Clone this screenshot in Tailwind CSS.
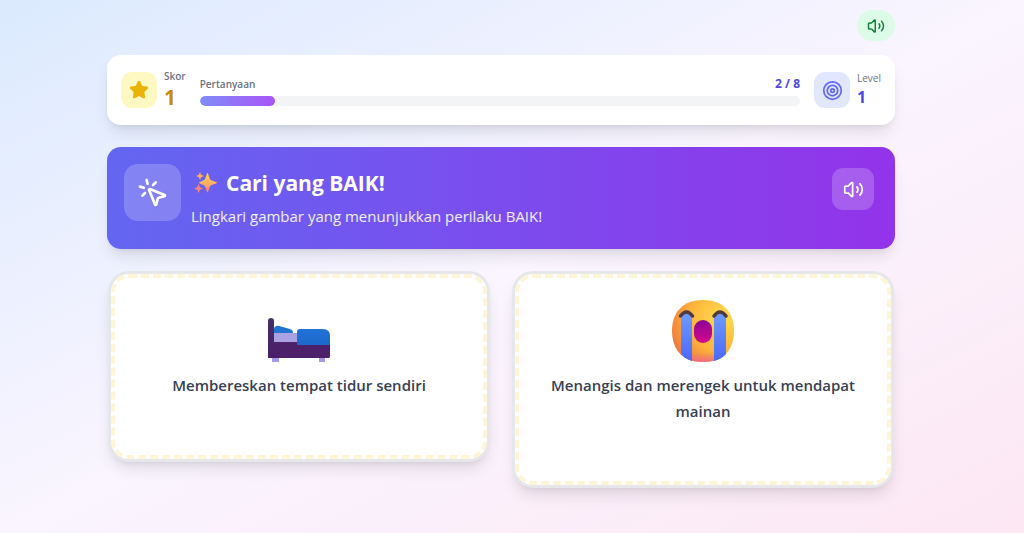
<!DOCTYPE html>
<html lang="id">
<head>
  <meta charset="UTF-8" />
  <meta name="viewport" content="width=device-width, initial-scale=1.0" />
  <title>Cari yang BAIK!</title>
  <script src="https://cdn.jsdelivr.net/npm/@tailwindcss/browser@4"></script>
</head>
<body class="min-h-screen bg-linear-to-br/srgb from-[#dbeafe] via-[#faf5ff] to-[#fce7f3] font-['Segoe_UI','Open_Sans',sans-serif] pr-[22px]">

<div class="max-w-[788px] mx-auto pt-[10px] pb-8">

  <div class="flex justify-end mb-[14px]">
    <button type="button" aria-label="Suara" class="flex items-center justify-center w-[38px] h-[31px] rounded-full bg-[#dcfce7] text-[#15803d]">
      <svg class="size-[18px]" viewBox="0 0 24 24" fill="none" stroke="currentColor" stroke-width="2" stroke-linecap="round" stroke-linejoin="round">
        <path d="M11 4.702a.705.705 0 0 0-1.203-.498L6.413 7.587A1.4 1.4 0 0 1 5.416 8H3a1 1 0 0 0-1 1v6a1 1 0 0 0 1 1h2.416a1.4 1.4 0 0 1 .997.413l3.383 3.384A.705.705 0 0 0 11 19.298z" />
        <path d="M16 9a5 5 0 0 1 0 6" />
        <path d="M19.364 18.364a9 9 0 0 0 0-12.728" />
      </svg>
    </button>
  </div>

  <!-- Score bar -->
  <header class="flex items-center gap-[14px] h-[70px] px-[14px] mb-[22px] bg-white rounded-[14px] shadow-lg">
    <div class="flex items-center gap-[7px]">
      <div class="flex items-center justify-center size-9 rounded-[11px] bg-[#fef9c3] text-[#eab308]">
        <svg class="size-5" viewBox="0 0 24 24" fill="currentColor" stroke="currentColor" stroke-width="2" stroke-linecap="round" stroke-linejoin="round">
          <path d="M11.525 2.295a.53.53 0 0 1 .95 0l2.31 4.679a2.123 2.123 0 0 0 1.595 1.16l5.166.756a.53.53 0 0 1 .294.904l-3.736 3.638a2.123 2.123 0 0 0-.611 1.878l.882 5.14a.53.53 0 0 1-.771.56l-4.618-2.428a2.122 2.122 0 0 0-1.973 0L6.396 21.01a.53.53 0 0 1-.77-.56l.881-5.139a2.122 2.122 0 0 0-.611-1.879L2.16 9.795a.53.53 0 0 1 .294-.906l5.165-.755a2.122 2.122 0 0 0 1.597-1.16z" />
        </svg>
      </div>
      <div>
        <p class="text-[10px] leading-[14px] font-semibold text-[#6b7280]">Skor</p>
        <p class="text-[21px] leading-[28px] font-bold text-[#ca8a04]">1</p>
      </div>
    </div>

    <div class="flex-1">
      <div class="flex items-center justify-between mb-[3px] leading-[18px]">
        <span class="text-[10px] font-semibold text-[#6b7280]">Pertanyaan</span>
        <span class="text-[12px] font-bold text-[#4f46e5]">2 / 8</span>
      </div>
      <div class="h-[10px] rounded-full bg-[#f3f4f6] overflow-hidden">
        <div class="h-full rounded-full bg-linear-to-r/srgb from-[#818cf8] to-[#a855f7]" style="width: 12.5%"></div>
      </div>
    </div>

    <div class="flex items-center gap-[7px]">
      <div class="flex items-center justify-center size-9 rounded-[11px] bg-[#e0e7ff] text-[#6366f1]">
        <svg class="size-[21px]" viewBox="0 0 24 24" fill="none" stroke="currentColor" stroke-width="2">
          <circle cx="12" cy="12" r="10" />
          <circle cx="12" cy="12" r="6" />
          <circle cx="12" cy="12" r="2" />
        </svg>
      </div>
      <div>
        <p class="text-[10px] leading-[14px] font-medium text-[#6b7280]">Level</p>
        <p class="text-[16px] leading-[25px] font-bold text-[#4f46e5]">1</p>
      </div>
    </div>
  </header>

  <!-- Instruction -->
  <section class="flex items-start gap-[10px] h-[102px] pl-[17px] pr-[21px] pt-[17px] mb-[22px] rounded-[14px] bg-linear-to-r/srgb from-[#6366f1] to-[#9333ea] text-white shadow-lg">
    <div class="flex items-center justify-center size-[57px] rounded-[14px] bg-white/20">
      <svg class="size-8" viewBox="0 0 24 24" fill="none" stroke="currentColor" stroke-width="2" stroke-linecap="round" stroke-linejoin="round">
        <path d="M14 4.1 12 6" />
        <path d="m5.1 8-2.9-.8" />
        <path d="m6 12-1.9 2" />
        <path d="M7.2 2.2 8 5.1" />
        <path d="M9.037 9.69a.498.498 0 0 1 .653-.653l11 4.5a.5.5 0 0 1-.074.949l-4.349 1.041a1 1 0 0 0-.74.739l-1.04 4.35a.5.5 0 0 1-.95.074z" />
      </svg>
    </div>
    <div class="flex-1 pt-[3px]">
      <h1 class="flex items-center gap-2 pl-[3px] text-[21px] leading-[32px] font-bold">
        <svg class="size-6" viewBox="0 0 24 24">
          <defs>
            <linearGradient id="spark" x1="0" y1="0" x2="0" y2="1">
              <stop offset="0" stop-color="#ffd34a" />
              <stop offset="0.5" stop-color="#ffb45c" />
              <stop offset="1" stop-color="#ff7d78" />
            </linearGradient>
          </defs>
          <path fill="url(#spark)" d="M12.8 3q.7-1.800 1.400 0l1.500 4.500q.5 1.500 2 2l4.500 1.500q1.600.7 0 1.400l-4.500 1.500q-1.500.5-2 2l-1.500 4.500q-.7 1.700-1.400 0l-1.500-4.500q-.5-1.500-2-2l-3.500-1.500q-1.600-.7 0-1.400l3.500-1.500q1.500-.5 2-2z" />
          <path fill="#ffad5c" d="M5.6 1.800q.4-.8.8 0l.7 2 2 .8q.8.400 0 .8l-2 .8-.7 2q-.4.800-.8 0l-.7-2-2-.8q-.8-.4 0-.8l2-.8z" />
          <path fill="#ff8474" d="M4.200 13.800q.4-.9.800 0l.9 2.400 2.400.9q.9.400 0 .8l-2.400.9-.9 2.400q-.4.900-.8 0l-.9-2.400-2.400-.9q-.8-.4 0-.8l2.400-.9z" />
        </svg>
        Cari yang BAIK!
      </h1>
      <p class="text-[15px] leading-[34px] text-white/90">Lingkari gambar yang menunjukkan perilaku BAIK!</p>
    </div>
    <button type="button" aria-label="Dengarkan" class="flex items-center justify-center size-[42px] mt-1 rounded-[11px] bg-white/20">
      <svg class="size-[21px]" viewBox="0 0 24 24" fill="none" stroke="currentColor" stroke-width="2" stroke-linecap="round" stroke-linejoin="round">
        <path d="M11 4.702a.705.705 0 0 0-1.203-.498L6.413 7.587A1.4 1.4 0 0 1 5.416 8H3a1 1 0 0 0-1 1v6a1 1 0 0 0 1 1h2.416a1.4 1.4 0 0 1 .997.413l3.383 3.384A.705.705 0 0 0 11 19.298z" />
        <path d="M16 9a5 5 0 0 1 0 6" />
        <path d="M19.364 18.364a9 9 0 0 0 0-12.728" />
      </svg>
    </button>
  </section>

  <!-- Choices -->
  <main class="grid grid-cols-2 items-start gap-[22px] px-px">
    <button type="button" class="rounded-[21px] border-3 border-[#e5e7eb] bg-white shadow-lg">
      <span class="flex flex-col items-center gap-[10px] rounded-[18px] border-4 border-dashed border-[#fef5d6] px-6 pt-[22px] pb-[57px]">
        <svg class="size-[62px]" viewBox="0 0 62 62">
          <defs>
            <linearGradient id="frame" x1="0" y1="0" x2="0" y2="1">
              <stop offset="0" stop-color="#433168" />
              <stop offset="1" stop-color="#4b1d68" />
            </linearGradient>
            <linearGradient id="quilt" x1="0" y1="0" x2="0" y2="1">
              <stop offset="0" stop-color="#2273d8" />
              <stop offset="1" stop-color="#1b69ca" />
            </linearGradient>
          </defs>
          <rect x="4" y="57" width="7" height="5" fill="#a797e5" />
          <rect x="51" y="57" width="6" height="5" fill="#a797e5" />
          <rect x="6" y="33" width="24" height="9" fill="#aaa2e3" />
          <path fill="#2074d2" d="M6 33v-4q1-4 5-3l11 3q3 1 3 4z" />
          <path fill="#4d206a" d="M3 42h59v14q0 2-1 2H2z" />
          <path fill="url(#frame)" d="M0 21q0-3 3-3t3 3v21h2v16H0z" />
          <path fill="url(#quilt)" d="M29 32q0-3 3-3h23q7 0 7 7v9H29z" />
        </svg>
        <span class="text-[15px] leading-[26px] font-semibold text-[#374151]">Membereskan tempat tidur sendiri</span>
      </span>
    </button>

    <button type="button" class="rounded-[21px] border-3 border-[#e5e7eb] bg-white shadow-lg">
      <span class="flex flex-col items-center gap-[10px] rounded-[18px] border-4 border-dashed border-[#fef5d6] px-6 pt-[22px] pb-[57px]">
        <svg class="size-[62px]" viewBox="0 0 62 62">
          <defs>
            <radialGradient id="face" cx="0.8" cy="0.3" r="0.95">
              <stop offset="0" stop-color="#ffdc4e" />
              <stop offset="0.55" stop-color="#fdb43c" />
              <stop offset="1" stop-color="#ea6d3f" />
            </radialGradient>
            <linearGradient id="chin" x1="0" y1="0" x2="0" y2="1">
              <stop offset="0.85" stop-color="#f05fa0" stop-opacity="0" />
              <stop offset="1" stop-color="#f05fa0" stop-opacity="0.7" />
            </linearGradient>
            <linearGradient id="tear" x1="0" y1="0" x2="0" y2="1">
              <stop offset="0" stop-color="#6f9bff" />
              <stop offset="1" stop-color="#4a68fa" />
            </linearGradient>
            <linearGradient id="mouth" x1="0" y1="0" x2="0" y2="1">
              <stop offset="0" stop-color="#8b0796" />
              <stop offset="1" stop-color="#d5068d" />
            </linearGradient>
          </defs>
          <path fill="url(#face)" d="M31 0c20 0 31 12 31 31 0 16-8 27-21 30q-10 2-20 0C8 58 0 47 0 31 0 12 11 0 31 0z" />
          <path fill="url(#chin)" d="M31 0c20 0 31 12 31 31 0 16-8 27-21 30q-10 2-20 0C8 58 0 47 0 31 0 12 11 0 31 0z" />
          <path fill="url(#tear)" d="M9 15q5-3 11 0v46Q13 59 9 54z" />
          <path fill="url(#tear)" d="M42 15q6-3 12 0v39q-4 5-12 7z" />
          <path fill="none" stroke="#503b40" stroke-width="3.500" stroke-linecap="round" d="M8.500 16q6-8 12 0M42 16q6-8 12 0" />
          <rect x="22" y="20" width="18" height="23" rx="9" fill="url(#mouth)" />
        </svg>
        <span class="text-[15px] leading-[26px] font-semibold text-[#374151]">Menangis dan merengek untuk mendapat mainan</span>
      </span>
    </button>
  </main>

</div>

</body>
</html>
